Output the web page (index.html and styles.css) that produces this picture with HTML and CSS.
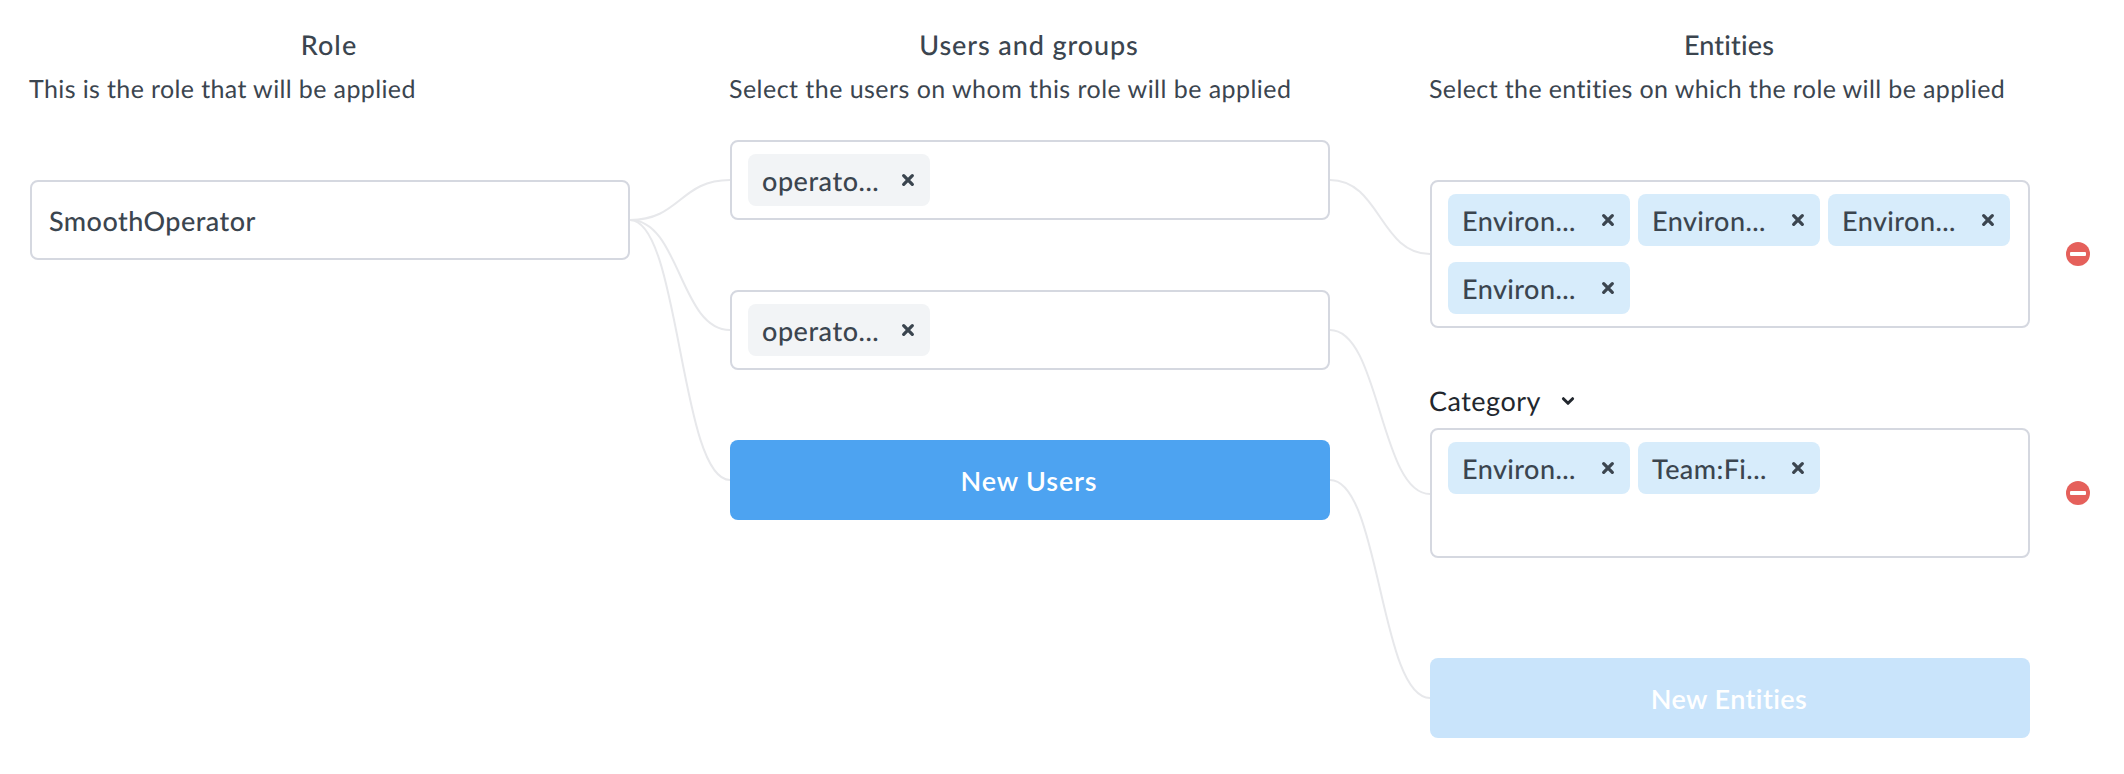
FILE: index.html
```html
<!DOCTYPE html>
<html lang="en">
<head>
<meta charset="utf-8">
<title>Role assignment</title>
<link rel="stylesheet" href="styles.css">
</head>
<body>
<svg class="sprite" aria-hidden="true">
  <symbol id="close" viewBox="0 0 14 14"><path d="M2.7 2.7 11.3 11.3M11.3 2.7 2.7 11.3" fill="none" stroke="currentColor" stroke-width="3.3" stroke-linecap="round"/></symbol>
  <symbol id="minus" viewBox="0 0 24 24"><circle cx="12" cy="12" r="12" fill="#e5605b"/><rect x="4" y="10" width="16" height="4" rx="1" fill="#fff"/></symbol>
</svg>
<main class="board">
  <section class="column">
    <h2 class="title title-role">Role</h2>
    <p class="hint">This is the role that will be applied</p>
    <div class="stack stack-role">
      <div class="field field-text">SmoothOperator</div>
    </div>
  </section>

  <svg class="links" viewBox="0 0 100 774" aria-hidden="true">
    <path d="M0 220C50 220 50 180 100 180"/>
    <path d="M0 220C50 220 50 330 100 330"/>
    <path d="M0 220C50 220 50 480 100 480"/>
  </svg>

  <section class="column">
    <h2 class="title title-users">Users and groups</h2>
    <p class="hint hint-users">Select the users on whom this role will be applied</p>
    <div class="stack stack-users">
      <div class="field"><span class="tag tag-user">operato...<svg class="close"><use href="#close"/></svg></span></div>
      <div class="field"><span class="tag tag-user">operato...<svg class="close"><use href="#close"/></svg></span></div>
      <button class="button button-users">New Users</button>
    </div>
  </section>

  <svg class="links" viewBox="0 0 100 774" aria-hidden="true">
    <path d="M0 180C50 180 50 254 100 254"/>
    <path d="M0 330C50 330 50 494 100 494"/>
    <path d="M0 480C50 480 50 698 100 698"/>
  </svg>

  <section class="column">
    <h2 class="title title-entities">Entities</h2>
    <p class="hint">Select the entities on which the role will be applied</p>
    <div class="stack stack-entities">
      <div class="row">
        <div class="field">
          <span class="tag">Environ...<svg class="close"><use href="#close"/></svg></span>
          <span class="tag">Environ...<svg class="close"><use href="#close"/></svg></span>
          <span class="tag">Environ...<svg class="close"><use href="#close"/></svg></span>
          <span class="tag">Environ...<svg class="close"><use href="#close"/></svg></span>
        </div>
        <svg class="remove"><use href="#minus"/></svg>
      </div>
      <div class="category">Category
        <svg class="chevron" viewBox="0 0 14 10"><path d="M2.4 2.7 7 7.3 11.6 2.7" fill="none" stroke="currentColor" stroke-width="3" stroke-linecap="round" stroke-linejoin="round"/></svg>
      </div>
      <div class="row">
        <div class="field field-tall">
          <span class="tag">Environ...<svg class="close"><use href="#close"/></svg></span>
          <span class="tag">Team:Fi...<svg class="close"><use href="#close"/></svg></span>
        </div>
        <svg class="remove"><use href="#minus"/></svg>
      </div>
      <button class="button button-entities" disabled>New Entities</button>
    </div>
  </section>
</main>
</body>
</html>
```

FILE: styles.css
```css
* { box-sizing: border-box; }

body {
  margin: 0;
  background: #fff;
  color: #3b454f;
  font: 500 27px/31px Lato, "Open Sans", sans-serif;
  text-rendering: geometricPrecision;
}

.sprite { display: none; }

.board {
  display: grid;
  grid-template-columns: 600px 100px 600px 100px 600px;
  height: 774px;
  padding-left: 30px;
}

.column { padding-top: 29px; }

.title {
  margin: 0 0 14px;
  padding-right: 2px;
  font-size: 27px;
  font-weight: 500;
  line-height: 31px;
  text-align: center;
}
.title-role { letter-spacing: 1.1px; }
.title-users { letter-spacing: 0.9px; }
.title-entities { letter-spacing: 0.17px; }

.hint {
  margin: 0 0 0 -1px;
  font-size: 25px;
  font-weight: 400;
  line-height: 30px;
  letter-spacing: 0.38px;
  white-space: nowrap;
}
.hint-users { letter-spacing: 0.46px; }

.stack { display: flex; flex-direction: column; }
.stack-role { padding-top: 76px; }
.stack-users { padding-top: 36px; gap: 70px; }
.stack-entities { padding-top: 76px; }

.links { display: block; width: 100px; height: 774px; }
.links path { fill: none; stroke: #e7e8eb; stroke-width: 2; }

.field {
  display: flex;
  flex-wrap: wrap;
  align-content: flex-start;
  gap: 16px 8px;
  width: 600px;
  min-height: 80px;
  padding: 12px 16px;
  border: 2px solid #d5d8e0;
  border-radius: 8px;
  background: #fff;
}
.field-text {
  align-content: center;
  padding: 0 17px;
  letter-spacing: 0.45px;
}
.field-tall { min-height: 130px; }

.tag {
  display: flex;
  align-items: center;
  justify-content: space-between;
  width: 182px;
  height: 52px;
  padding: 0 15px 0 14px;
  border-radius: 8px;
  background: #d7ecfb;
  letter-spacing: 0.42px;
}
.tag-user { background: #f2f4f6; letter-spacing: 0.52px; }

.close { width: 14px; height: 14px; }

.row { display: flex; align-items: center; gap: 36px; width: 660px; }
.row .field { flex: none; }
.remove { flex: none; width: 24px; height: 24px; }

.category {
  display: flex;
  align-items: center;
  gap: 20px;
  margin: 57px 0 11px -1px;
  color: #22272e;
  font-weight: 400;
  line-height: 32px;
  letter-spacing: 0.49px;
}
.chevron { width: 14px; height: 10px; }

.button {
  width: 600px;
  height: 80px;
  padding: 0 2px 0 0;
  border: 0;
  border-radius: 8px;
  background: #4da3f1;
  color: #fff;
  font: 600 27px/31px Lato, "Open Sans", sans-serif;
}
.button-users { letter-spacing: 0.85px; }
.button-entities {
  margin-top: 100px;
  background: #c9e4fb;
  letter-spacing: 0.4px;
}
```
